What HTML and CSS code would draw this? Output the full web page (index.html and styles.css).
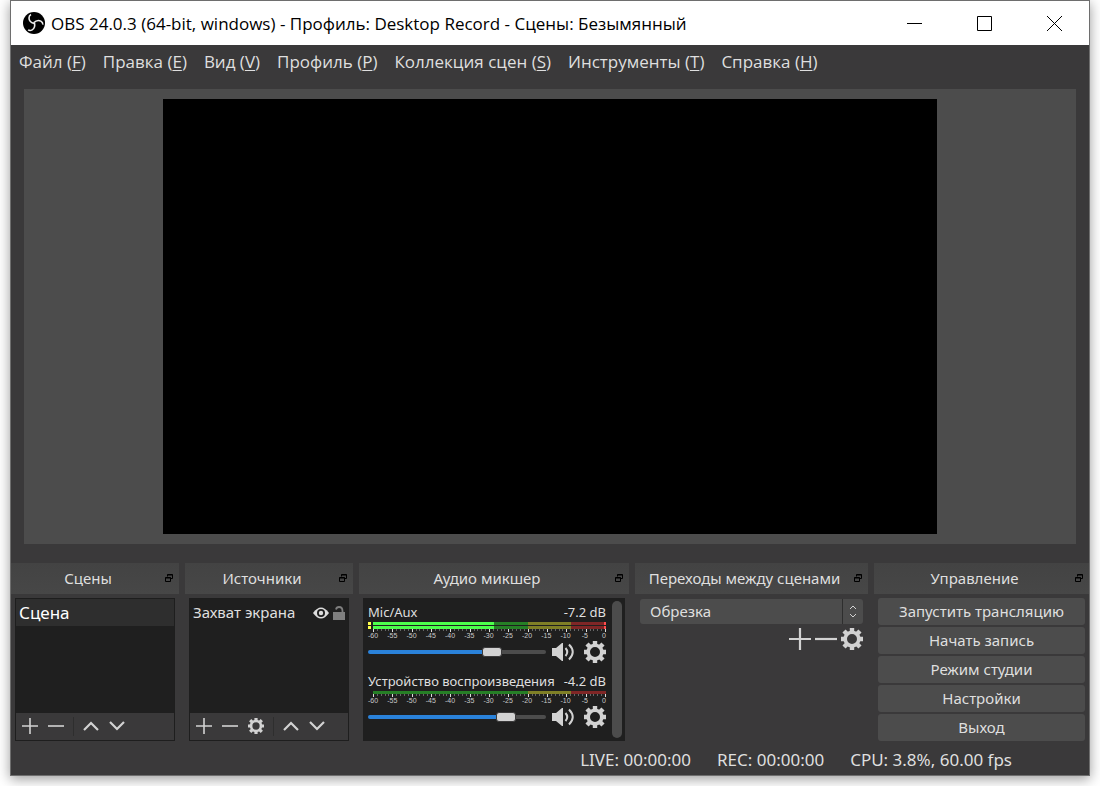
FILE: index.html
```html
<!DOCTYPE html>
<html lang="ru">
<head>
    <meta charset="UTF-8">
    <title>OBS 24.0.3</title>
    <link rel="stylesheet" href="styles.css">
</head>
<body>
    <!-- shared icons -->
    <svg class="sprite" aria-hidden="true">
        <symbol id="gear" viewBox="0 0 22 22">
            <circle cx="11" cy="11" r="6.8" fill="none" stroke="currentColor" stroke-width="3.6"/>
            <path d="M11 0v4M11 18v4M0 11h4M18 11h4M3 3l3.4 3.4M15.6 15.6L19 19M3 19l3.4-3.4M15.6 6.4L19 3" stroke="currentColor" stroke-width="4.4"/>
        </symbol>
        <symbol id="plus" viewBox="0 0 16 16">
            <path d="M8 0v16M0 8h16" stroke="currentColor" stroke-width="1.6"/>
        </symbol>
        <symbol id="minus" viewBox="0 0 16 16">
            <path d="M0 8h16" stroke="currentColor" stroke-width="1.6"/>
        </symbol>
        <symbol id="up" viewBox="0 0 16 16">
            <path d="M1 12l7-7 7 7" fill="none" stroke="currentColor" stroke-width="2.2"/>
        </symbol>
        <symbol id="down" viewBox="0 0 16 16">
            <path d="M1 4l7 7 7-7" fill="none" stroke="currentColor" stroke-width="2.2"/>
        </symbol>
        <symbol id="float" viewBox="0 0 8 8">
            <path d="M2.5 2.5v-2h5v4h-2M2.5 1h5M.5 3.5h5v4h-5zM.5 4h5" fill="none" stroke="#000"/>
        </symbol>
        <symbol id="speaker" viewBox="0 0 22 18">
            <path d="M0 5h4l6-5h1v18h-1l-6-5H0z" fill="currentColor"/>
            <path d="M13.5 5q3.5 4 0 8M17 1.5q7.500 7.500 0 15" fill="none" stroke="currentColor" stroke-width="2"/>
        </symbol>
    </svg>

    <div class="window">
        <header class="titlebar">
            <svg class="logo" viewBox="0 0 22 22">
                <circle cx="11" cy="11" r="11" fill="#000"/>
                <g fill="none" stroke="#eee" stroke-width="1.6">
                    <path d="M11 11.5Q6 10 6 6Q6 3.5 8 2.5"/>
                    <path d="M11 11.5Q6 10 6 6Q6 3.5 8 2.5" transform="rotate(120 11 11)"/>
                    <path d="M11 11.5Q6 10 6 6Q6 3.5 8 2.5" transform="rotate(240 11 11)"/>
                </g>
            </svg>
            <h1>OBS 24.0.3 (64-bit, windows) - Профиль: Desktop Record - Сцены: Безымянный</h1>
            <div class="window_buttons">
                <button type="button" aria-label="Свернуть"><svg viewBox="0 0 15 15"><path d="M0 7.5h15"/></svg></button>
                <button type="button" aria-label="Развернуть"><svg viewBox="0 0 15 15"><path d="M.5 .5h14v14h-14z"/></svg></button>
                <button type="button" aria-label="Закрыть"><svg viewBox="0 0 15 15"><path d="M0 0l15 15M15 0L0 15"/></svg></button>
            </div>
        </header>

        <nav class="menu">
            <a href="#">Файл (<u>F</u>)</a>
            <a href="#">Правка (<u>E</u>)</a>
            <a href="#">Вид (<u>V</u>)</a>
            <a href="#">Профиль (<u>P</u>)</a>
            <a href="#">Коллекция сцен (<u>S</u>)</a>
            <a href="#">Инструменты (<u>T</u>)</a>
            <a href="#">Справка (<u>H</u>)</a>
        </nav>

        <main class="preview">
            <div class="canvas"></div>
        </main>

        <div class="docks">
            <section class="dock">
                <div class="dock_title"><h2>Сцены</h2><svg><use href="#float"/></svg></div>
                <div class="list_box">
                    <ul>
                        <li class="selected">Сцена</li>
                    </ul>
                    <div class="toolbar">
                        <button type="button" aria-label="Добавить"><svg><use href="#plus"/></svg></button>
                        <button type="button" aria-label="Удалить"><svg><use href="#minus"/></svg></button>
                        <span class="separator"></span>
                        <button type="button" aria-label="Вверх"><svg><use href="#up"/></svg></button>
                        <button type="button" aria-label="Вниз"><svg><use href="#down"/></svg></button>
                    </div>
                </div>
            </section>

            <section class="dock">
                <div class="dock_title"><h2>Источники</h2><svg><use href="#float"/></svg></div>
                <div class="list_box">
                    <ul>
                        <li class="source">
                            <span>Захват экрана</span>
                            <svg class="eye" viewBox="0 0 16 12">
                                <path d="M0 6q8-11 16 0q-8 11-16 0z" fill="#ddd"/>
                                <circle cx="8" cy="6" r="4" fill="#1f1f1f"/>
                                <circle cx="8" cy="6" r="2.2" fill="#ddd"/>
                            </svg>
                            <svg class="lock" viewBox="0 0 12 14">
                                <path d="M0 6h12v8H0z" fill="#7f7f7f"/>
                                <path d="M3 3.5Q3.5 1 6 1q3.5 0 3.5 4v2" fill="none" stroke="#7f7f7f" stroke-width="1.8"/>
                            </svg>
                        </li>
                    </ul>
                    <div class="toolbar">
                        <button type="button" aria-label="Добавить"><svg><use href="#plus"/></svg></button>
                        <button type="button" aria-label="Удалить"><svg><use href="#minus"/></svg></button>
                        <button type="button" aria-label="Свойства"><svg><use href="#gear"/></svg></button>
                        <span class="separator"></span>
                        <button type="button" aria-label="Вверх"><svg><use href="#up"/></svg></button>
                        <button type="button" aria-label="Вниз"><svg><use href="#down"/></svg></button>
                    </div>
                </div>
            </section>

            <section class="dock">
                <div class="dock_title"><h2>Аудио микшер</h2><svg><use href="#float"/></svg></div>
                <div class="mixer">
                    <div class="channels">
                        <div class="channel">
                            <div class="channel_name"><label for="mic">Mic/Aux</label><span>-7.2 dB</span></div>
                            <div class="meter"><i class="clip"></i><div class="level"><b style="width: 52%"></b><em></em></div></div>
                            <div class="meter"><i class="clip"></i><div class="level"><b style="width: 52%"></b><em></em></div></div>
                            <div class="ticks"></div>
                            <div class="scale"><span>-60</span><span>-55</span><span>-50</span><span>-45</span><span>-40</span><span>-35</span><span>-30</span><span>-25</span><span>-20</span><span>-15</span><span>-10</span><span>-5</span><span>0</span></div>
                            <div class="channel_controls">
                                <input type="range" id="mic" min="0" max="100" value="72" style="--value: 72%">
                                <button type="button" aria-label="Звук"><svg class="speaker"><use href="#speaker"/></svg></button>
                                <button type="button" aria-label="Настройки"><svg class="gear"><use href="#gear"/></svg></button>
                            </div>
                        </div>
                        <div class="channel">
                            <div class="channel_name"><label for="desktop">Устройство воспроизведения</label><span>-4.2 dB</span></div>
                            <div class="meter"><div class="level"></div></div>
                            <div class="ticks"></div>
                            <div class="scale"><span>-60</span><span>-55</span><span>-50</span><span>-45</span><span>-40</span><span>-35</span><span>-30</span><span>-25</span><span>-20</span><span>-15</span><span>-10</span><span>-5</span><span>0</span></div>
                            <div class="channel_controls">
                                <input type="range" id="desktop" min="0" max="100" value="81" style="--value: 81%">
                                <button type="button" aria-label="Звук"><svg class="speaker"><use href="#speaker"/></svg></button>
                                <button type="button" aria-label="Настройки"><svg class="gear"><use href="#gear"/></svg></button>
                            </div>
                        </div>
                    </div>
                    <div class="scrollbar"></div>
                </div>
            </section>

            <section class="dock">
                <div class="dock_title"><h2>Переходы между сценами</h2><svg><use href="#float"/></svg></div>
                <div class="transitions">
                    <div class="combo">
                        <select aria-label="Переход">
                            <option>Обрезка</option>
                        </select>
                        <svg viewBox="0 0 20 25"><path d="M7 10l3-3 3 3M7 15l3 3 3-3"/></svg>
                    </div>
                    <div class="transition_buttons">
                        <button type="button" aria-label="Добавить"><svg><use href="#plus"/></svg></button>
                        <button type="button" aria-label="Удалить"><svg><use href="#minus"/></svg></button>
                        <button type="button" aria-label="Свойства"><svg><use href="#gear"/></svg></button>
                    </div>
                </div>
            </section>

            <section class="dock">
                <div class="dock_title"><h2>Управление</h2><svg><use href="#float"/></svg></div>
                <div class="controls">
                    <button type="button">Запустить трансляцию</button>
                    <button type="button">Начать запись</button>
                    <button type="button">Режим студии</button>
                    <button type="button">Настройки</button>
                    <button type="button">Выход</button>
                </div>
            </section>
        </div>

        <footer class="status">
            <span>LIVE: 00:00:00</span>
            <span>REC: 00:00:00</span>
            <span>CPU: 3.8%, 60.00 fps</span>
        </footer>
    </div>
</body>
</html>
```
FILE: styles.css
```css
* {
    box-sizing: border-box;
}
body {
    display: flex;
    height: 100vh;
    min-height: 500px;
    margin: 0;
    padding: 0 10px 10px;
    background: #fff;
    font-family: "Noto Sans", "Open Sans", sans-serif;
    font-size: 15px;
    color: #dfdfdf;
}
button {
    margin: 0;
    padding: 0;
    border: 0;
    background: none;
    color: inherit;
    font: inherit;
}
h1, h2 {
    margin: 0;
    font-weight: normal;
    white-space: nowrap;
}
svg {
    display: block;
}
.sprite {
    position: absolute;
    width: 0;
    height: 0;
}
.window {
    display: flex;
    flex-direction: column;
    flex: 1;
    min-width: 0;
    border: 1px solid #6e6e6e;
    background: #3a393a;
    box-shadow: 0 3px 12px rgba(0, 0, 0, 0.4);
}

/* title bar and menu */
.titlebar {
    display: flex;
    align-items: center;
    height: 44px;
    padding-left: 12px;
    background: #fff;
    color: #000;
}
.logo {
    width: 22px;
    height: 22px;
    margin-right: 6px;
}
.titlebar h1 {
    flex: 1;
    font-family: "Open Sans", sans-serif;
    font-size: 17px;
}
.window_buttons {
    display: flex;
}
.window_buttons button {
    width: 70px;
    height: 44px;
}
.window_buttons svg {
    width: 15px;
    height: 15px;
    margin: 0 auto;
    fill: none;
    stroke: #000;
}
.menu {
    display: flex;
    gap: 17px;
    height: 34px;
    padding-left: 8px;
    font-family: "Open Sans", sans-serif;
    font-size: 17px;
    line-height: 34px;
    white-space: nowrap;
}
.menu a {
    color: inherit;
    text-decoration: none;
}
.menu u {
    text-underline-offset: 2px;
}

/* preview */
.preview {
    display: flex;
    flex: 1;
    justify-content: center;
    min-height: 0;
    margin: 10px 13px 19px;
    padding: 10px;
    background: #4c4c4c;
}
.canvas {
    height: 100%;
    aspect-ratio: 16 / 9;
    background: #000;
}

/* docks */
.docks {
    display: grid;
    grid-template-columns: 168fr 168fr 270fr 233fr 215fr;
    gap: 6px;
}
.dock {
    display: flex;
    flex-direction: column;
    min-width: 0;
}
.dock_title {
    display: flex;
    align-items: center;
    height: 31px;
    margin-bottom: 4px;
    padding: 0 6px 1px 0;
    background: linear-gradient(#434343, #474747);
}
.dock_title h2 {
    flex: 1;
    font-size: 15px;
    text-align: center;
}
.dock_title svg {
    width: 8px;
    height: 8px;
}
.list_box {
    display: flex;
    flex-direction: column;
    height: 143px;
    margin: 0 4px;
    border: 1px solid #1e1e1e;
    background: #1f1f1f;
}
.list_box ul {
    flex: 1;
    margin: 0;
    padding: 0;
    list-style: none;
}
.list_box li {
    height: 27px;
    padding: 0 3px;
    line-height: 27px;
}
.list_box .selected {
    background: #2e2e2e;
    color: #fff;
    font-size: 17px;
}
.source {
    display: flex;
    align-items: center;
    gap: 4px;
}
.source span {
    flex: 1;
    white-space: nowrap;
}
.eye {
    width: 16px;
    height: 12px;
}
.lock {
    width: 12px;
    height: 14px;
}
.toolbar {
    display: flex;
    height: 27px;
    padding-left: 1px;
    background: #3a393a;
    color: #d2d2d2;
}
.toolbar button {
    width: 26px;
    height: 26px;
}
.toolbar svg {
    width: 16px;
    height: 16px;
    margin: 0 auto;
}
.separator {
    width: 1px;
    height: 19px;
    margin: 4px;
    background: #2e2e2e;
}

/* mixer */
.mixer {
    display: flex;
    gap: 6px;
    height: 143px;
    margin: 0 4px;
    padding: 3px 3px 3px 5px;
    background: #1f1f1f;
}
.channels {
    flex: 1;
    min-width: 0;
    padding-top: 2px;
}
.channel {
    margin-bottom: 9px;
}
.channel_name {
    display: flex;
    justify-content: space-between;
    height: 18px;
    margin-bottom: 1px;
    font-size: 13px;
    line-height: 18px;
    white-space: nowrap;
}
.meter {
    display: flex;
    height: 3px;
    padding-left: 5px;
}
.meter + .meter {
    margin-top: 1px;
}
.clip {
    width: 3px;
    height: 3px;
    margin: 0 2px 0 -5px;
    background: #ffff4c;
}
.level {
    display: flex;
    flex: 1;
    justify-content: space-between;
    background: linear-gradient(to right, #267f26 66.6%, #7f7f26 66.6% 85%, #7f2626 85%);
}
.level b {
    background: #4cff4c;
}
.level em {
    width: 2px;
    background: #ff4c4c;
}
.ticks {
    height: 3px;
    margin-left: 5px;
    border-right: 1px solid #ddd;
    background:
        repeating-linear-gradient(to right, #ddd 0 1px, transparent 1px calc(100% / 12)),
        repeating-linear-gradient(to right, #666 0 1px, transparent 1px calc(100% / 60)) 0 0 / 100% 2px no-repeat;
}
.scale {
    display: flex;
    justify-content: space-between;
    height: 8px;
    margin-right: -3px;
    color: #c8c8c8;
    font-family: "Liberation Sans", sans-serif;
    font-size: 7px;
    line-height: 8px;
}
.scale span {
    width: 10px;
    text-align: center;
}
.channel_controls {
    display: flex;
    align-items: center;
    height: 22px;
    margin-top: 1px;
    color: #d2d2d2;
}
.channel_controls input {
    flex: 1;
    min-width: 0;
    height: 22px;
    margin: 0 6px 0 0;
    appearance: none;
    background: none;
}
.channel_controls input::-webkit-slider-runnable-track {
    height: 4px;
    border-radius: 2px;
    background: linear-gradient(to right, #2a82da var(--value), #4c4c4c var(--value));
}
.channel_controls input::-webkit-slider-thumb {
    width: 20px;
    height: 10px;
    margin-top: -3px;
    appearance: none;
    border: 1px solid #3a393a;
    border-radius: 3px;
    background: #d2d2d2;
}
.speaker {
    width: 22px;
    height: 18px;
    margin-right: 10px;
}
.gear {
    width: 22px;
    height: 22px;
}
.scrollbar {
    width: 10px;
    border-radius: 5px;
    background: #4c4c4c;
}

/* transitions */
.transitions {
    margin: 1px 5px 0;
}
.combo {
    position: relative;
}
.combo select {
    display: block;
    width: 100%;
    height: 25px;
    padding: 0 30px 1px 10px;
    appearance: none;
    border: 0;
    border-radius: 3px;
    background: #4c4c4c;
    color: inherit;
    font: inherit;
}
.combo svg {
    position: absolute;
    top: 0;
    right: 0;
    width: 21px;
    height: 25px;
    border-left: 1px solid #2e2e2e;
    fill: none;
    stroke: #d2d2d2;
    pointer-events: none;
}
.transition_buttons {
    display: flex;
    justify-content: flex-end;
    gap: 4px;
    margin-top: 4px;
    color: #d2d2d2;
}
.transition_buttons svg {
    width: 22px;
    height: 22px;
}

/* controls */
.controls {
    display: flex;
    flex-direction: column;
    gap: 2px;
    margin: 0 4px;
}
.controls button {
    height: 27px;
    padding-bottom: 1px;
    border-radius: 3px;
    background: #4c4c4c;
}

.status {
    display: flex;
    justify-content: flex-end;
    gap: 26px;
    height: 34px;
    padding: 2px 77px 0 0;
    font-size: 17px;
    line-height: 34px;
    white-space: nowrap;
}
```
